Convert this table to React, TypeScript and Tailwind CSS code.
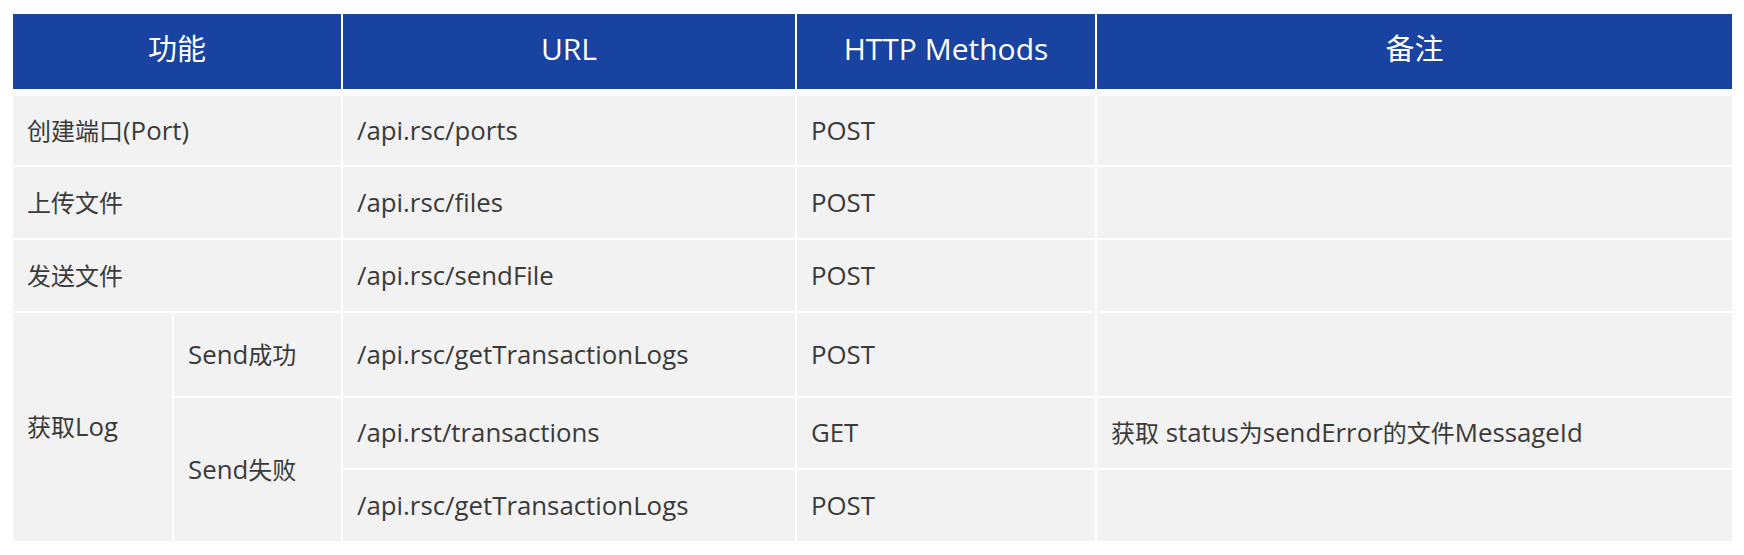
import React from 'react';

const CJK = /([\u4e00-\u9fff]+)/;

function Mixed({ text, cjk }: { text: string; cjk: string }) {
  const parts = text.split(CJK).filter(Boolean);
  return (
    <span className="whitespace-pre">
      {parts.map((p, i) =>
        CJK.test(p) ? (
          <span key={i} className={cjk}>
            {p}
          </span>
        ) : (
          <span key={i}>{p}</span>
        )
      )}
    </span>
  );
}

const cols = 'grid grid-cols-[159px_167px_452px_298px_635px] gap-x-[2px]';

function Head({ text, span }: { text: string; span?: string }) {
  return (
    <div className={`${span ?? ''} flex items-center justify-center bg-[#1843a0] pb-[5px] text-[30px] text-white`}>
      <Mixed text={text} cjk="text-[29px]" />
    </div>
  );
}

function Cell({ text, className }: { text?: string; className?: string }) {
  return (
    <div className={`${className ?? ''} flex items-center bg-[#f2f2f2] px-[14px] text-[25.8px] text-[#3a3a3a]`}>
      {text && <Mixed text={text} cjk="text-[24px]" />}
    </div>
  );
}

export default function App() {
  return (
    <div className="min-h-screen bg-white pt-[14px] pl-[13px] font-['Open_Sans','Noto_Sans_CJK_SC',sans-serif] leading-none">
      {/* header */}
      <div className={`${cols} h-[75px]`}>
        <Head text="功能" span="col-span-2" />
        <Head text="URL" />
        <Head text="HTTP Methods" />
        <Head text="备注" />
      </div>

      {/* body */}
      <div className={`${cols} mt-[7px] grid-rows-[69px_71px_71px_83px_70px_71px] gap-y-[2px]`}>
        <Cell text="创建端口(Port)" className="col-span-2" />
        <Cell text="/api.rsc/ports" />
        <Cell text="POST" />
        <Cell />

        <Cell text="上传文件" className="col-span-2" />
        <Cell text="/api.rsc/files" />
        <Cell text="POST" />
        <Cell />

        <Cell text="发送文件" className="col-span-2" />
        <Cell text="/api.rsc/sendFile" />
        <Cell text="POST" />
        <Cell />

        <Cell text="获取Log" className="row-span-3" />
        <Cell text="Send成功" />
        <Cell text="/api.rsc/getTransactionLogs" />
        <Cell text="POST" />
        <Cell />

        <Cell text="Send失败" className="row-span-2" />
        <Cell text="/api.rst/transactions" />
        <Cell text="GET" />
        <Cell text="获取 status为sendError的文件MessageId" />

        <Cell text="/api.rsc/getTransactionLogs" />
        <Cell text="POST" />
        <Cell />
      </div>
    </div>
  );
}
